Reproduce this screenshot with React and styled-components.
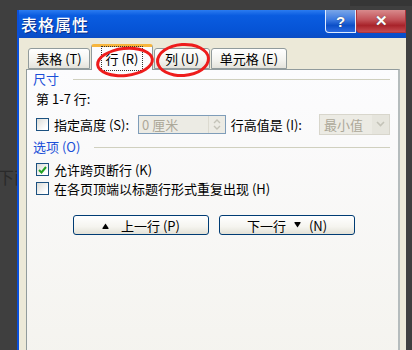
import React from 'react';
import styled, { createGlobalStyle } from 'styled-components';

const Global = createGlobalStyle`
  html, body { margin: 0; padding: 0; }
  body {
    width: 412px;
    height: 350px;
    overflow: hidden;
    background: #3e3e3e;
    font-family: "Noto Sans CJK SC", "Liberation Sans", sans-serif;
  }
`;

const Page = styled.div`
  position: relative;
  width: 412px;
  height: 350px;
  overflow: hidden;
  background: #3f3f3f;
  padding: 10px 0 0 17px;
  box-sizing: border-box;
`;

const TopShade = styled.div`
  position: absolute;
  left: 350px;
  top: 0;
  width: 62px;
  height: 6px;
  background: #363636;
`;

const BackText = styled.span`
  position: absolute;
  left: -3px;
  top: 164px;
  font-size: 17px;
  color: #2a2a2a;
  white-space: nowrap;
`;

const Dialog = styled.div`
  position: relative;
  z-index: 1;
  width: 389px;
  height: 360px;
  display: flex;
  flex-direction: column;
  background: #ece9d8;
  border-left: 2px solid #0b4fd9;
  box-sizing: border-box;
`;

const TitleBar = styled.div`
  height: 28px;
  flex-shrink: 0;
  display: flex;
  align-items: center;
  justify-content: space-between;
  background: linear-gradient(180deg, #2b7bf0 0%, #0a5ce0 20%, #0654d6 70%, #0a4cc4 100%);
  padding-left: 2px;
`;

const Title = styled.span`
  color: #fff;
  font-size: 16px;
  font-weight: 500;
  letter-spacing: 1px;
  text-shadow: 1px 1px 0 #0a2f8a;
`;

const TitleButtons = styled.div`
  display: flex;
  align-self: flex-start;
  height: 23px;
`;

const CapButton = styled.div`
  width: ${(p) => p.$w}px;
  height: 23px;
  display: flex;
  align-items: center;
  justify-content: center;
  color: #fff;
  font-family: "Liberation Sans", sans-serif;
  font-weight: 700;
  font-size: 15px;
  box-sizing: border-box;
  border: 1px solid ${(p) => (p.$red ? '#b0343b' : '#e0ecff')};
  border-top: none;
  border-radius: 0 0 0 4px;
  background: ${(p) =>
    p.$red
      ? 'linear-gradient(180deg, #d88a8c 0%, #c25157 45%, #a8232a 70%, #c54b50 100%)'
      : 'linear-gradient(180deg, #7aa6e8 0%, #3a78e0 45%, #0c4fc8 70%, #2c6be0 100%)'};
  text-shadow: 0 0 1px #333;
`;

const Client = styled.div`
  flex: 1;
  padding: 5px 6px 0 7px;
  display: flex;
  flex-direction: column;
`;

const TabRow = styled.div`
  display: flex;
  align-items: flex-end;
  height: 26px;
  flex-shrink: 0;
  padding-left: 2px;
  position: relative;
  z-index: 1;
`;

const Tab = styled.div`
  height: ${(p) => (p.$active ? 26 : 21)}px;
  box-sizing: border-box;
  display: flex;
  align-items: center;
  justify-content: center;
  white-space: nowrap;
  font-size: 13px;
  color: #000;
  background: ${(p) =>
    p.$active ? '#fcfcfe' : 'linear-gradient(180deg, #ffffff 0%, #f3f3ef 60%, #e4e3dc 100%)'};
  border: 1px solid #919b9c;
  border-bottom: ${(p) => (p.$active ? 'none' : '1px solid #919b9c')};
  border-top: ${(p) => (p.$active ? '3px solid #f7b53c' : '1px solid #919b9c')};
  border-radius: 3px 3px 0 0;
  margin-bottom: ${(p) => (p.$active ? -1 : 0)}px;
  margin-right: 1px;
  width: ${(p) => p.$w}px;
`;

const Focus = styled.span`
  outline: 1px dotted #333;
  outline-offset: 2px;
  padding: 0 2px;
`;

const Panel = styled.div`
  flex: 1;
  border: 1px solid #919b9c;
  border-right: 2px solid #b5bcbd;
  background: linear-gradient(180deg, #fcfcfe 0%, #f4f3ee 100%);
  padding: 0 8px 0 6px;
  box-sizing: border-box;
`;

const Group = styled.div`
  display: flex;
  align-items: center;
  gap: 14px;
  height: 17px;
  color: #1b4fd8;
  font-size: 13px;
  margin-top: ${(p) => p.$mt || 0}px;
  white-space: nowrap;
`;

const Rule = styled.div`
  flex: 1;
  height: 1px;
  background: #d0d0bf;
  margin-top: 2px;
`;

const Line = styled.div`
  display: flex;
  align-items: center;
  font-size: 13px;
  color: #000;
  height: ${(p) => p.$h || 19}px;
  padding-left: 3px;
  margin-top: ${(p) => p.$mt || 0}px;
  white-space: nowrap;
`;

const Box = styled.span`
  width: 11px;
  height: 11px;
  border: 1px solid #1c5180;
  background: linear-gradient(135deg, #dcdcd7 0%, #fff 80%);
  margin-right: 5px;
  display: inline-flex;
  align-items: center;
  justify-content: center;
  flex-shrink: 0;
`;

const Input = styled.div`
  width: 89px;
  height: 19px;
  margin: 0 5px 0 9px;
  border: 1px solid #7f9db9;
  background: #ecebe4;
  color: #aca899;
  display: flex;
  align-items: center;
  justify-content: space-between;
  padding-left: 3px;
  box-sizing: border-box;
  font-size: 13px;
`;

const Spin = styled.div`
  width: 16px;
  height: 17px;
  border-left: 1px solid #dcdad0;
  display: flex;
  align-items: center;
  justify-content: center;
`;

const Select = styled.div`
  width: 72px;
  height: 21px;
  margin-left: 17px;
  border: 1px solid #d8d6cc;
  background: #ecebe4;
  color: #aca899;
  display: flex;
  align-items: center;
  justify-content: space-between;
  padding-left: 4px;
  box-sizing: border-box;
  font-size: 13px;
`;

const Drop = styled.div`
  width: 17px;
  height: 19px;
  background: #e6e5dd;
  display: flex;
  align-items: center;
  justify-content: center;
`;

const Buttons = styled.div`
  display: flex;
  gap: 10px;
  padding-left: 40px;
  margin-top: 17px;
`;

const Button = styled.div`
  width: 136px;
  height: 20px;
  box-sizing: border-box;
  border: 1px solid #003c74;
  border-radius: 3px;
  background: linear-gradient(180deg, #ffffff 0%, #f5f4ef 60%, #e3e1d6 100%);
  display: flex;
  align-items: center;
  justify-content: center;
  font-size: 13px;
  color: #000;
  white-space: pre;
`;

const Arrow = styled.svg`
  margin: ${(p) => (p.$after ? '0 8px' : '0 12px 0 0')};
`;

const Ring = styled.div`
  position: absolute;
  left: ${(p) => p.$x}px;
  top: ${(p) => p.$y}px;
  width: ${(p) => p.$w}px;
  height: ${(p) => p.$h}px;
  border: 3px solid #ee1c1c;
  border-radius: 50%;
  transform: rotate(${(p) => p.$r || 0}deg);
  pointer-events: none;
  z-index: 2;
`;

const UpArrow = (props) => (
  <Arrow width="7" height="7" viewBox="0 0 7 7" {...props}>
    <path d="M0.5 6 L3.5 1.5 L6.5 6 Z" fill="#000" />
    <rect x="0.5" y="6" width="6" height="1" fill="#000" />
  </Arrow>
);

const DownArrow = (props) => (
  <Arrow width="7" height="7" viewBox="0 0 7 7" {...props}>
    <rect x="0.5" y="0" width="6" height="1" fill="#000" />
    <path d="M0.5 1 L3.5 5.5 L6.5 1 Z" fill="#000" />
  </Arrow>
);

export default function App() {
  return (
    <>
      <Global />
      <Page>
        <TopShade />
        <BackText>下面</BackText>
        <Dialog>
          <TitleBar>
            <Title>表格属性</Title>
            <TitleButtons>
              <CapButton $w={31}>?</CapButton>
              <CapButton $w={50} $red>✕</CapButton>
            </TitleButtons>
          </TitleBar>
          <Client>
            <TabRow>
              <Tab $w={62}>表格 (T)</Tab>
              <Tab $w={62} $active><Focus>行 (R)</Focus></Tab>
              <Tab $w={56}>列 (U)</Tab>
              <Tab $w={76}>单元格 (E)</Tab>
            </TabRow>
            <Panel>
              <Group>尺寸<Rule /></Group>
              <Line $mt={2}>第 1-7 行:</Line>
              <Line $h={22} $mt={5}>
                <Box />
                指定高度 (S):
                <Input>
                  0 厘米
                  <Spin>
                    <svg width="8" height="13" viewBox="0 0 8 13">
                      <path d="M1 5 L4 2 L7 5" stroke="#c4c3b8" strokeWidth="1.4" fill="none" />
                      <path d="M1 8 L4 11 L7 8" stroke="#c4c3b8" strokeWidth="1.4" fill="none" />
                    </svg>
                  </Spin>
                </Input>
                行高值是 (I):
                <Select>
                  最小值
                  <Drop>
                    <svg width="9" height="6" viewBox="0 0 9 6">
                      <path d="M1 1 L4.5 4.5 L8 1" stroke="#c4c3b8" strokeWidth="1.6" fill="none" />
                    </svg>
                  </Drop>
                </Select>
              </Line>
              <Group $mt={3}>选项 (O)<Rule /></Group>
              <Line $mt={5}>
                <Box>
                  <svg width="9" height="8" viewBox="0 0 9 8">
                    <path d="M1 4 L3.5 6.5 L8 1" stroke="#21a121" strokeWidth="2" fill="none" />
                  </svg>
                </Box>
                允许跨页断行 (K)
              </Line>
              <Line>
                <Box />
                在各页顶端以标题行形式重复出现 (H)
              </Line>
              <Buttons>
                <Button><UpArrow />上一行 (P)</Button>
                <Button>下一行<DownArrow $after />(N)</Button>
              </Buttons>
            </Panel>
          </Client>
        </Dialog>
        <Ring $x={96} $y={47} $w={52} $h={24} $r={-6} />
        <Ring $x={156} $y={43} $w={48} $h={28} $r={-4} />
      </Page>
    </>
  );
}
